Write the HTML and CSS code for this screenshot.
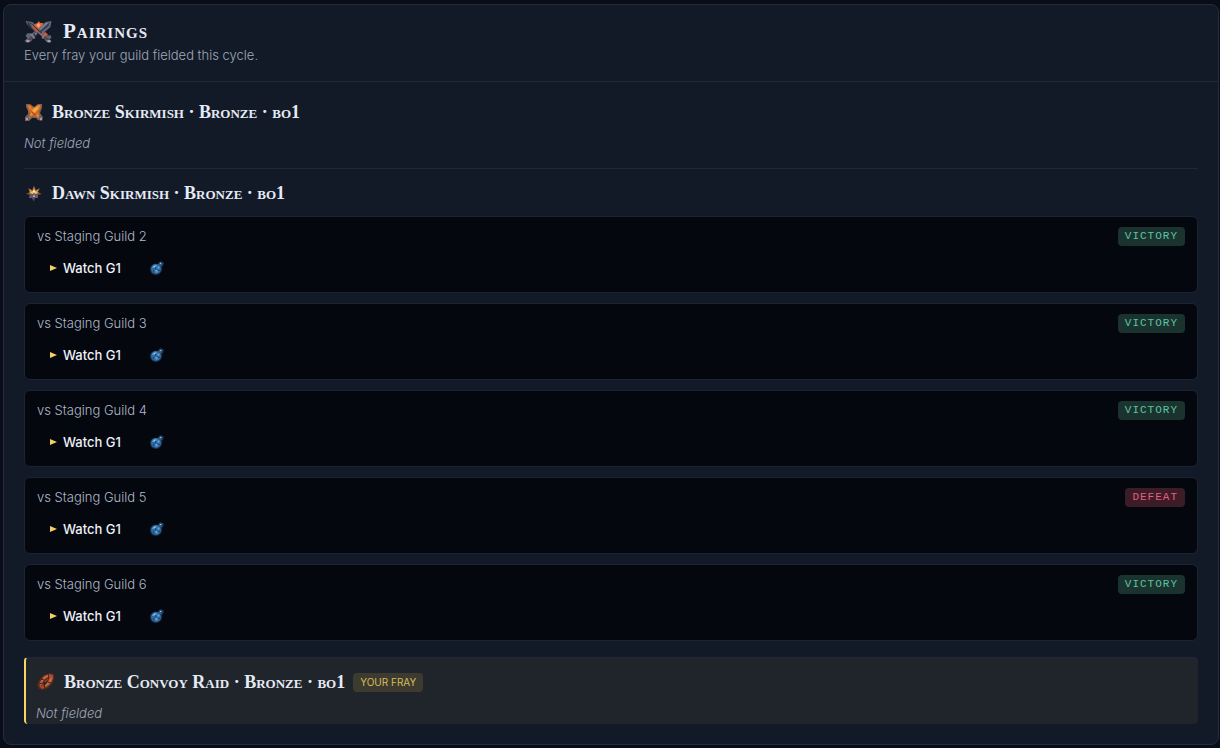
FILE: index.html
```html
<!DOCTYPE html>
<html lang="en">
<head>
  <meta charset="UTF-8" />
  <meta name="viewport" content="width=device-width, initial-scale=1" />
  <title>Pairings</title>
  <link rel="stylesheet" href="styles.css">
</head>
<body>
  <!-- shared icons -->
  <svg class="sprite" aria-hidden="true">
    <symbol id="play" viewBox="0 0 8 8">
      <path d="M1 1l7 3-7 3z" fill="#f5cf63" />
    </symbol>
    <symbol id="flask" viewBox="0 0 14 14">
      <path d="M8 3l1-2 2-1 3 2-1 3-1 1c1 4-2 8-6 8-4 0-6-3-6-6 0-4 4-6 8-5z" fill="#1c3147" />
      <circle cx="6" cy="8" r="5" fill="#2f699f" />
      <path d="M8 4l1-2 2-1 2 1-1 2-2 2z" fill="#2c5c86" />
      <path d="M3 5l2-1 2 0-1 2-2 1H2zM7 6l2-1 1 2-2 1zM5 9l2 0 1 2-2 1z" fill="#5d9fd0" />
      <path d="M5 6h1v2H5zM8 9h2v1H8zM3 9h1v2H3z" fill="#1b4878" />
      <path d="M10 2h1v1h-1zM4 5h1v1H4z" fill="#a5cce6" />
    </symbol>
  </svg>

  <main class="panel">
    <header class="panel-header">
      <h1>
        <svg class="icon-lg" viewBox="0 0 28 24" aria-hidden="true">
          <path d="M1 2l7 1 7 7 6-7 6-1-1 6-7 6 3 3 4-1 1 3-2 1 2 3-3 1-3-2-2-4-5-4-5 4-2 4-4 2-3-2 3-3-2-2 2-3 4 1 3-3-7-6z" fill="#5f6577" />
          <path d="M10 5l3-1 1-2 2 2 3 0-1 4-4 4-4-4z" fill="#d9663a" />
          <path d="M12 6l2-2 2 2-2 3z" fill="#ffa765" />
          <path d="M25 3l-4 1-13 12 2 2L24 7z" fill="#353b50" />
          <path d="M25 3l-4 1-11 11 1 1z" fill="#78839c" />
          <path d="M3 3l1 5 15 11 2-2L8 5z" fill="#2b3042" />
          <path d="M4 4l4 2 12 12-1 1z" fill="#6b7793" />
          <path d="M6 7l3 1 5 5-2 1zM16 14l5-1 3 3-4 2z" fill="#bd5234" />
          <path d="M5 14l3 1 3 4-2 1zM22 14l-3 2-2 3 2 1z" fill="#7d828f" />
          <path d="M7 17l2 2-4 3-2-1zM20 17l-1 2 5 3 1-2z" fill="#5b4245" />
          <path d="M2 21h3v2H2zM23 21h3v2h-3z" fill="#9da1ac" />
        </svg>
        Pairings
      </h1>
      <p>Every fray your guild fielded this cycle.</p>
    </header>

    <div class="panel-body">
      <section class="fray">
        <h2>
          <svg class="icon" viewBox="0 0 20 20" aria-hidden="true">
            <path d="M2 2l4 0 4 3 4-3 4 0 0 4-2 5 2 3 1 1-1 4-4-1-2-2H8l-3 3-4 0 0-4 3-3 0-3-2-4z" fill="#7a6052" />
            <path d="M3 3l4 0 9 10-2 3L5 10zM17 3l-4 0-8 10 2 2 9-7z" fill="#c96224" />
            <path d="M6 7l4-2 4 2 1 5-4 3-5-2z" fill="#cf6b24" />
            <path d="M16 3l-3 1-7 9 1 1 8-7z" fill="#ec9433" />
            <path d="M4 3l3 2 1 3-3-2zM12 12l3 1 0 2-2 0z" fill="#ef8436" />
            <path d="M9 7l3-2 2 2-5 5-2-1z" fill="#f4a845" />
            <path d="M7 10l4 4 1-1-4-4z" fill="#a8481f" />
            <path d="M2 16h2v2H2zM16 16h2v2h-2z" fill="#a8a4a4" />
            <path d="M5 14l2 1-2 2zM15 14l-2 1 2 2z" fill="#81818c" />
          </svg>
          Bronze Skirmish · Bronze · bo1
        </h2>
        <p class="note">Not fielded</p>
      </section>

      <section class="fray">
        <h2>
          <svg class="icon" viewBox="0 0 20 20" aria-hidden="true">
            <path d="M10 3l2 4 4-2-2 4 4 2-4 1 0 3-3-1-1 4-1-4-4 1 1-3-4-1 4-2-2-4 4 2z" fill="#74503e" />
            <path d="M10 3l1 5 4-2-2 4h-2l-1-2-1 2H6L5 6l4 2z" fill="#dc9140" />
            <path d="M10 6l2 3 3 1-4 1-1 3-1-3-4-1 3-1z" fill="#f6c36a" />
            <path d="M9 8h2v6H9z" fill="#fff0be" />
            <path d="M6 12l3 1 1 6-2-4-3 0zM11 13l3-1 0 3-3 0-1 3z" fill="#65587b" />
            <path d="M10 9l1 2-1 4-1-4z" fill="#53506b" />
          </svg>
          Dawn Skirmish · Bronze · bo1
        </h2>

        <ul class="matches">
          <li class="match">
            <div class="match-top">
              <span>vs Staging Guild 2</span>
              <span class="result win">VICTORY</span>
            </div>
            <div class="match-games">
              <button type="button" class="watch"><svg aria-hidden="true"><use href="#play" /></svg>Watch G1</button>
              <button type="button" class="flask" aria-label="Analyse G1"><svg aria-hidden="true"><use href="#flask" /></svg></button>
            </div>
          </li>
          <li class="match">
            <div class="match-top">
              <span>vs Staging Guild 3</span>
              <span class="result win">VICTORY</span>
            </div>
            <div class="match-games">
              <button type="button" class="watch"><svg aria-hidden="true"><use href="#play" /></svg>Watch G1</button>
              <button type="button" class="flask" aria-label="Analyse G1"><svg aria-hidden="true"><use href="#flask" /></svg></button>
            </div>
          </li>
          <li class="match">
            <div class="match-top">
              <span>vs Staging Guild 4</span>
              <span class="result win">VICTORY</span>
            </div>
            <div class="match-games">
              <button type="button" class="watch"><svg aria-hidden="true"><use href="#play" /></svg>Watch G1</button>
              <button type="button" class="flask" aria-label="Analyse G1"><svg aria-hidden="true"><use href="#flask" /></svg></button>
            </div>
          </li>
          <li class="match">
            <div class="match-top">
              <span>vs Staging Guild 5</span>
              <span class="result loss">DEFEAT</span>
            </div>
            <div class="match-games">
              <button type="button" class="watch"><svg aria-hidden="true"><use href="#play" /></svg>Watch G1</button>
              <button type="button" class="flask" aria-label="Analyse G1"><svg aria-hidden="true"><use href="#flask" /></svg></button>
            </div>
          </li>
          <li class="match">
            <div class="match-top">
              <span>vs Staging Guild 6</span>
              <span class="result win">VICTORY</span>
            </div>
            <div class="match-games">
              <button type="button" class="watch"><svg aria-hidden="true"><use href="#play" /></svg>Watch G1</button>
              <button type="button" class="flask" aria-label="Analyse G1"><svg aria-hidden="true"><use href="#flask" /></svg></button>
            </div>
          </li>
        </ul>
      </section>

      <section class="fray mine">
        <h2>
          <svg class="icon" viewBox="0 0 20 20" aria-hidden="true">
            <path d="M8 3l5-2 5 1 0 5-2 5-4 4-5 2-4-1-2-4 2-5z" fill="#542b21" />
            <path d="M8 4l5-2 4 1 0 4-2 4-4 4-5 2-2-2-1-3 2-4z" fill="#a64a2b" />
            <path d="M9 6l4-1 1 3-3 5-4 1-1-3z" fill="#2e211f" />
            <path d="M8 5l4-2 3 1-3 1-3 2-3 4-1 3-1-3zM14 6l2-1-1 5-3 3-5 2 4-4z" fill="#c96a3c" />
            <path d="M8 9l4-3 1 1-4 4zM5 13l2-2 1 2-2 2z" fill="#824026" />
            <path d="M12 2l1 3M5 7l3 1M3 12l3-1M9 16l-1-3M15 11l-3-1" stroke="#3c1f1b" />
          </svg>
          Bronze Convoy Raid · Bronze · bo1
          <span class="tag">YOUR FRAY</span>
        </h2>
        <p class="note">Not fielded</p>
      </section>
    </div>
  </main>
</body>
</html>
```

FILE: styles.css
```css
* {
  box-sizing: border-box;
}
body {
  margin: 0;
  padding: 4px 1px 3px 3px;
  background-color: #090d17;
  color: #e6eaf5;
  font-family: Inter, sans-serif;
  font-size: 13px;
  font-weight: 300;
  line-height: 20px;
}
h1, h2, p, ul {
  margin: 0;
  padding: 0;
}
.sprite {
  position: absolute;
  width: 0;
  height: 0;
}
.panel {
  background-color: #131a27;
  border: 1px solid #252c3d;
  border-radius: 8px;
}
.panel-header {
  padding: 14px 20px 16px;
  border-bottom: 1px solid #20283a;
  color: #9fa8ba;
}
.panel-header p {
  margin-top: 2px;
}
h1, h2 {
  display: flex;
  align-items: center;
  color: #e6eaf5;
  font-family: "Liberation Serif", serif;
  font-variant: small-caps;
  font-weight: bold;
}
h1 {
  gap: 10px;
  font-size: 21px;
  line-height: 24px;
  letter-spacing: 1px;
}
h2 {
  gap: 8px;
  font-size: 18px;
  line-height: 22px;
}
.icon-lg {
  width: 29px;
  height: 24px;
}
.icon {
  width: 20px;
  height: 20px;
}
.panel-body {
  padding: 6px 20px 20px;
}
.fray {
  padding: 13px 0 15px;
}
.fray + .fray {
  border-top: 1px solid #20273a;
}
.note {
  margin-top: 10px;
  color: #9fa8ba;
  font-style: italic;
}
.matches {
  display: grid;
  gap: 10px;
  padding: 12px 0 1px;
  list-style: none;
}
.match {
  padding: 9px 12px 8px;
  background-color: #04070e;
  border: 1px solid #1c2336;
  border-radius: 6px;
}
.match-top {
  display: flex;
  justify-content: space-between;
  align-items: center;
  color: #b0b8c9;
}
.result {
  padding: 0 7px;
  border-radius: 4px;
  font-family: "Liberation Mono", monospace;
  font-size: 11px;
  line-height: 19px;
  letter-spacing: 1px;
}
.win {
  background-color: #1a332f;
  color: #5dc3a0;
}
.loss {
  background-color: #3b1c27;
  color: #e55f7d;
}
.match-games {
  display: flex;
  gap: 5px;
  margin-top: 6px;
}
button {
  display: flex;
  align-items: center;
  height: 32px;
  padding: 0 12px;
  background: none;
  border: none;
  border-radius: 6px;
  color: #eef1f8;
  font: inherit;
  font-weight: 500;
  cursor: pointer;
}
button:hover {
  background-color: #141a27;
}
.watch {
  gap: 6px;
}
.watch svg {
  width: 8px;
  height: 8px;
}
.flask svg {
  width: 14px;
  height: 14px;
}
.fray.mine {
  padding: 13px 10px 1px;
  background-color: #1f252b;
  border-left: 2px solid #f5d565;
  border-radius: 4px;
}
.tag {
  padding: 0 7px;
  background-color: #3d3b30;
  border-radius: 4px;
  color: #d7bb5c;
  font-family: Inter, sans-serif;
  font-size: 10px;
  font-variant: normal;
  font-weight: normal;
  line-height: 19px;
}
```
